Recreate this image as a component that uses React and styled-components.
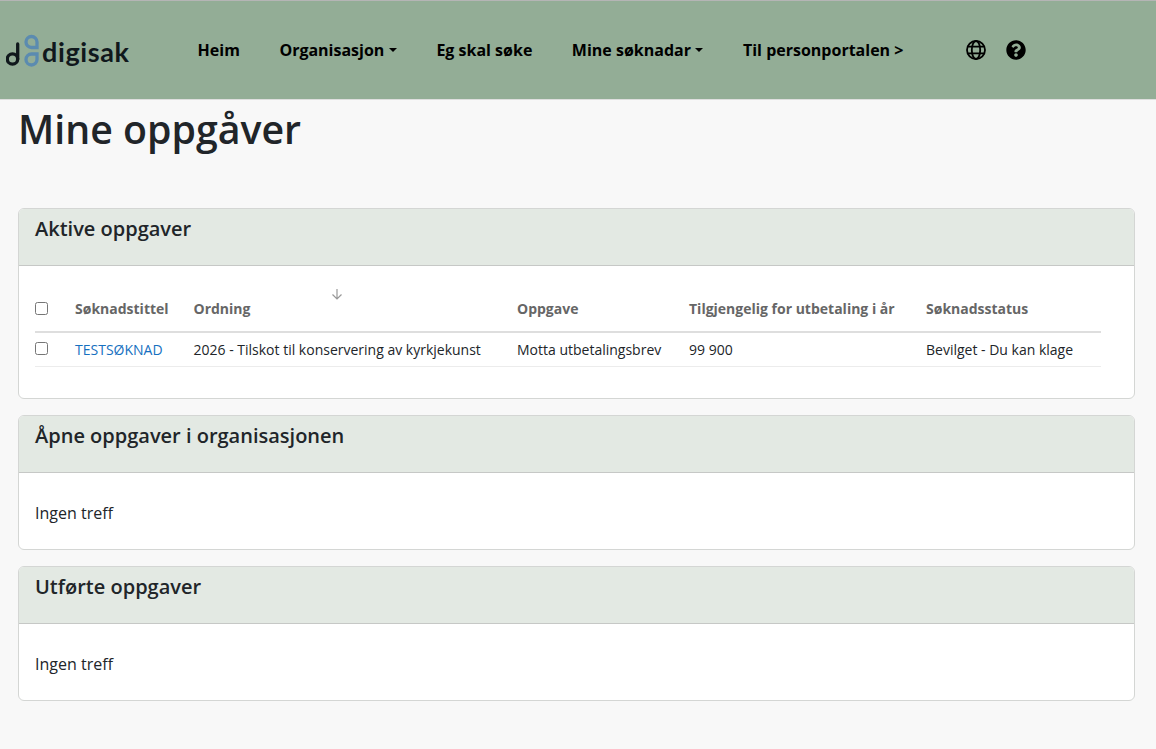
import React from "react";
import styled, { createGlobalStyle } from "styled-components";

const GlobalStyle = createGlobalStyle`
  * {
    box-sizing: border-box;
  }
  body {
    margin: 0;
    background: #f8f8f8;
    font-family: "Open Sans", "Liberation Sans", sans-serif;
    color: #212529;
  }
`;

const NavBar = styled.nav`
  height: 100px;
  background: #93ad96;
  border-top: 1px solid #b5b5b5;
  border-bottom: 1px solid #dedede;
  display: flex;
  align-items: center;
`;

const Brand = styled.a`
  width: 197.6px;
  display: flex;
  align-items: center;
  padding-left: 6px;
  gap: 2px;
`;

const BrandName = styled.span`
  font-family: "Lato", sans-serif;
  font-size: 27px;
  font-weight: 700;
  color: #10181c;
  letter-spacing: 0.6px;
  margin-top: 3px;
`;

const NavLink = styled.a`
  font-size: 16px;
  font-weight: 700;
  color: #000;
  margin-right: 39.5px;
  white-space: nowrap;
  display: flex;
  align-items: center;
`;

const Caret = styled.span`
  display: inline-block;
  margin-left: 4.5px;
  border-top: 4px solid #000;
  border-left: 4px solid transparent;
  border-right: 4px solid transparent;
`;

const IconSlot = styled.span`
  display: flex;
  margin-right: 20px;
  margin-left: ${(p) => p.$first ? "23.5px" : "0"};
`;

const Main = styled.main`
  padding: 0 21px 0 18px;
`;

const PageTitle = styled.h1`
  margin: 0 0 50px;
  font-size: 39.3px;
  line-height: 58px;
  font-weight: 600;
`;

const Card = styled.section`
  background: #fff;
  border: 1px solid #d4d6d4;
  border-radius: 6px;
  margin-bottom: 16px;
  overflow: hidden;
`;

const CardHeader = styled.header`
  height: 57px;
  padding: 5px 16px 0;
  background: #e3e9e3;
  border-bottom: 1px solid #c6c8c6;
`;

const CardTitle = styled.h2`
  margin: 0;
  font-size: 20px;
  line-height: 30px;
  font-weight: 600;
`;

const CardBody = styled.div`
  padding: ${(p) => p.$table ? "16px 33px 31px 16px" : "28px 16px 24px"};
  font-size: 16px;
  line-height: 24px;
  min-height: 76px;
`;

const Table = styled.table`
  width: 100%;
  border-collapse: collapse;
  table-layout: fixed;
  font-size: 14px;
`;

const HeadCell = styled.th`
  position: relative;
  height: 50px;
  padding: 17px 0 0;
  text-align: left;
  font-weight: 700;
  color: #666;
  border-bottom: 2px solid #dedede;
  width: ${(p) => p.$w}px;
  vertical-align: top;
  line-height: 19px;
`;

const SortArrow = styled.span`
  position: absolute;
  left: 137px;
  top: 6px;
  display: flex;
  color: #999;
`;

const Cell = styled.td`
  height: 34px;
  padding: 2px 0 0;
  border-bottom: 1px solid #ececec;
  color: #212529;
`;

const Check = styled.input.attrs({ type: "checkbox" })`
  display: block;
  width: 13px;
  height: 13px;
  margin: ${(p) => p.$head ? "3px 0 0" : "-4px 0 0"};
`;

const TitleLink = styled.a`
  color: #1670c0;
`;

const columns = [
  { label: "Søknadstittel", w: 118.5 },
  { label: "Ordning", w: 323.5, sorted: true },
  { label: "Oppgave", w: 172 },
  { label: "Tilgjengelig for utbetaling i år", w: 237 },
  { label: "Søknadsstatus" },
];

function Logo() {
  return (
    <svg width="34" height="36" viewBox="0 0 34 36" fill="none" strokeWidth="3.3">
      <circle cx="6.500" cy="27" r="5.200" stroke="#10181c" />
      <path d="M11.700 27V12" stroke="#10181c" strokeLinecap="round" />
      <path d="M25.500 4.500a5.500 5.500 0 0 1 5.500 5.500v5.500h-5.500a5.500 5.500 0 0 1 0-11z" stroke="#5b8bb0" />
      <path d="M25.500 33a5.500 5.500 0 0 0 5.500-5.500V22h-5.500a5.500 5.500 0 0 0 0 11z" stroke="#5b8bb0" />
    </svg>
  );
}

function GlobeIcon() {
  return (
    <svg width="20" height="20" viewBox="0 0 20 20" fill="none" stroke="#000" strokeWidth="1.8">
      <circle cx="10" cy="10" r="9" />
      <ellipse cx="10" cy="10" rx="4.2" ry="9" />
      <path d="M1.800 6.700h16.400M1.800 13.300h16.400" />
    </svg>
  );
}

function HelpIcon() {
  return (
    <svg width="20" height="20" viewBox="0 0 512 512" fill="#000">
      <path d="M504 256c0 137-111 248-248 248S8 393 8 256 119 8 256 8s248 111 248 248zM262.700 90c-54.500 0-89.300 23-116.500 63.800-3.500 5.300-2.400 12.400 2.700 16.300l34.700 26.300c5.200 3.900 12.600 3 16.700-2.100 17.900-22.700 30.100-35.800 57.300-35.800 20.400 0 45.700 13.100 45.700 33 0 15-12.400 22.700-32.600 34-23.600 13.200-54.800 29.700-54.800 70.900V300c0 6.600 5.400 12 12 12h56c6.600 0 12-5.400 12-12v-1.300c0-28.600 83.500-29.800 83.500-107.100C379.400 133.400 319 90 262.700 90zM256 339c-25.500 0-46.200 20.700-46.200 46.200 0 25.500 20.700 46.200 46.200 46.200s46.200-20.700 46.200-46.200c0-25.500-20.700-46.200-46.200-46.200z" />
    </svg>
  );
}

export default function App() {
  return (
    <>
      <GlobalStyle />
      <NavBar>
        <Brand>
          <Logo />
          <BrandName>digisak</BrandName>
        </Brand>
        <NavLink>Heim</NavLink>
        <NavLink>Organisasjon<Caret /></NavLink>
        <NavLink>Eg skal søke</NavLink>
        <NavLink>Mine søknadar<Caret /></NavLink>
        <NavLink>Til personportalen &gt;</NavLink>
        <IconSlot $first><GlobeIcon /></IconSlot>
        <IconSlot><HelpIcon /></IconSlot>
      </NavBar>
      <Main>
        <PageTitle>Mine oppgåver</PageTitle>
        <Card>
          <CardHeader><CardTitle>Aktive oppgaver</CardTitle></CardHeader>
          <CardBody $table>
            <Table>
              <thead>
                <tr>
                  <HeadCell $w={40}><Check $head /></HeadCell>
                  {columns.map((col) => (
                    <HeadCell key={col.label} $w={col.w}>
                      {col.sorted && (
                        <SortArrow>
                          <svg width="12" height="12" viewBox="0 0 12 12" fill="none" stroke="currentColor" strokeWidth="1.2">
                            <path d="M6 1v10M1.500 6.500 6 11l4.500-4.500" />
                          </svg>
                        </SortArrow>
                      )}
                      {col.label}
                    </HeadCell>
                  ))}
                </tr>
              </thead>
              <tbody>
                <tr>
                  <Cell><Check /></Cell>
                  <Cell><TitleLink>TESTSØKNAD</TitleLink></Cell>
                  <Cell>2026 - Tilskot til konservering av kyrkjekunst</Cell>
                  <Cell>Motta utbetalingsbrev</Cell>
                  <Cell>99 900</Cell>
                  <Cell>Bevilget - Du kan klage</Cell>
                </tr>
              </tbody>
            </Table>
          </CardBody>
        </Card>
        <Card>
          <CardHeader><CardTitle>Åpne oppgaver i organisasjonen</CardTitle></CardHeader>
          <CardBody>Ingen treff</CardBody>
        </Card>
        <Card>
          <CardHeader><CardTitle>Utførte oppgaver</CardTitle></CardHeader>
          <CardBody>Ingen treff</CardBody>
        </Card>
      </Main>
    </>
  );
}
